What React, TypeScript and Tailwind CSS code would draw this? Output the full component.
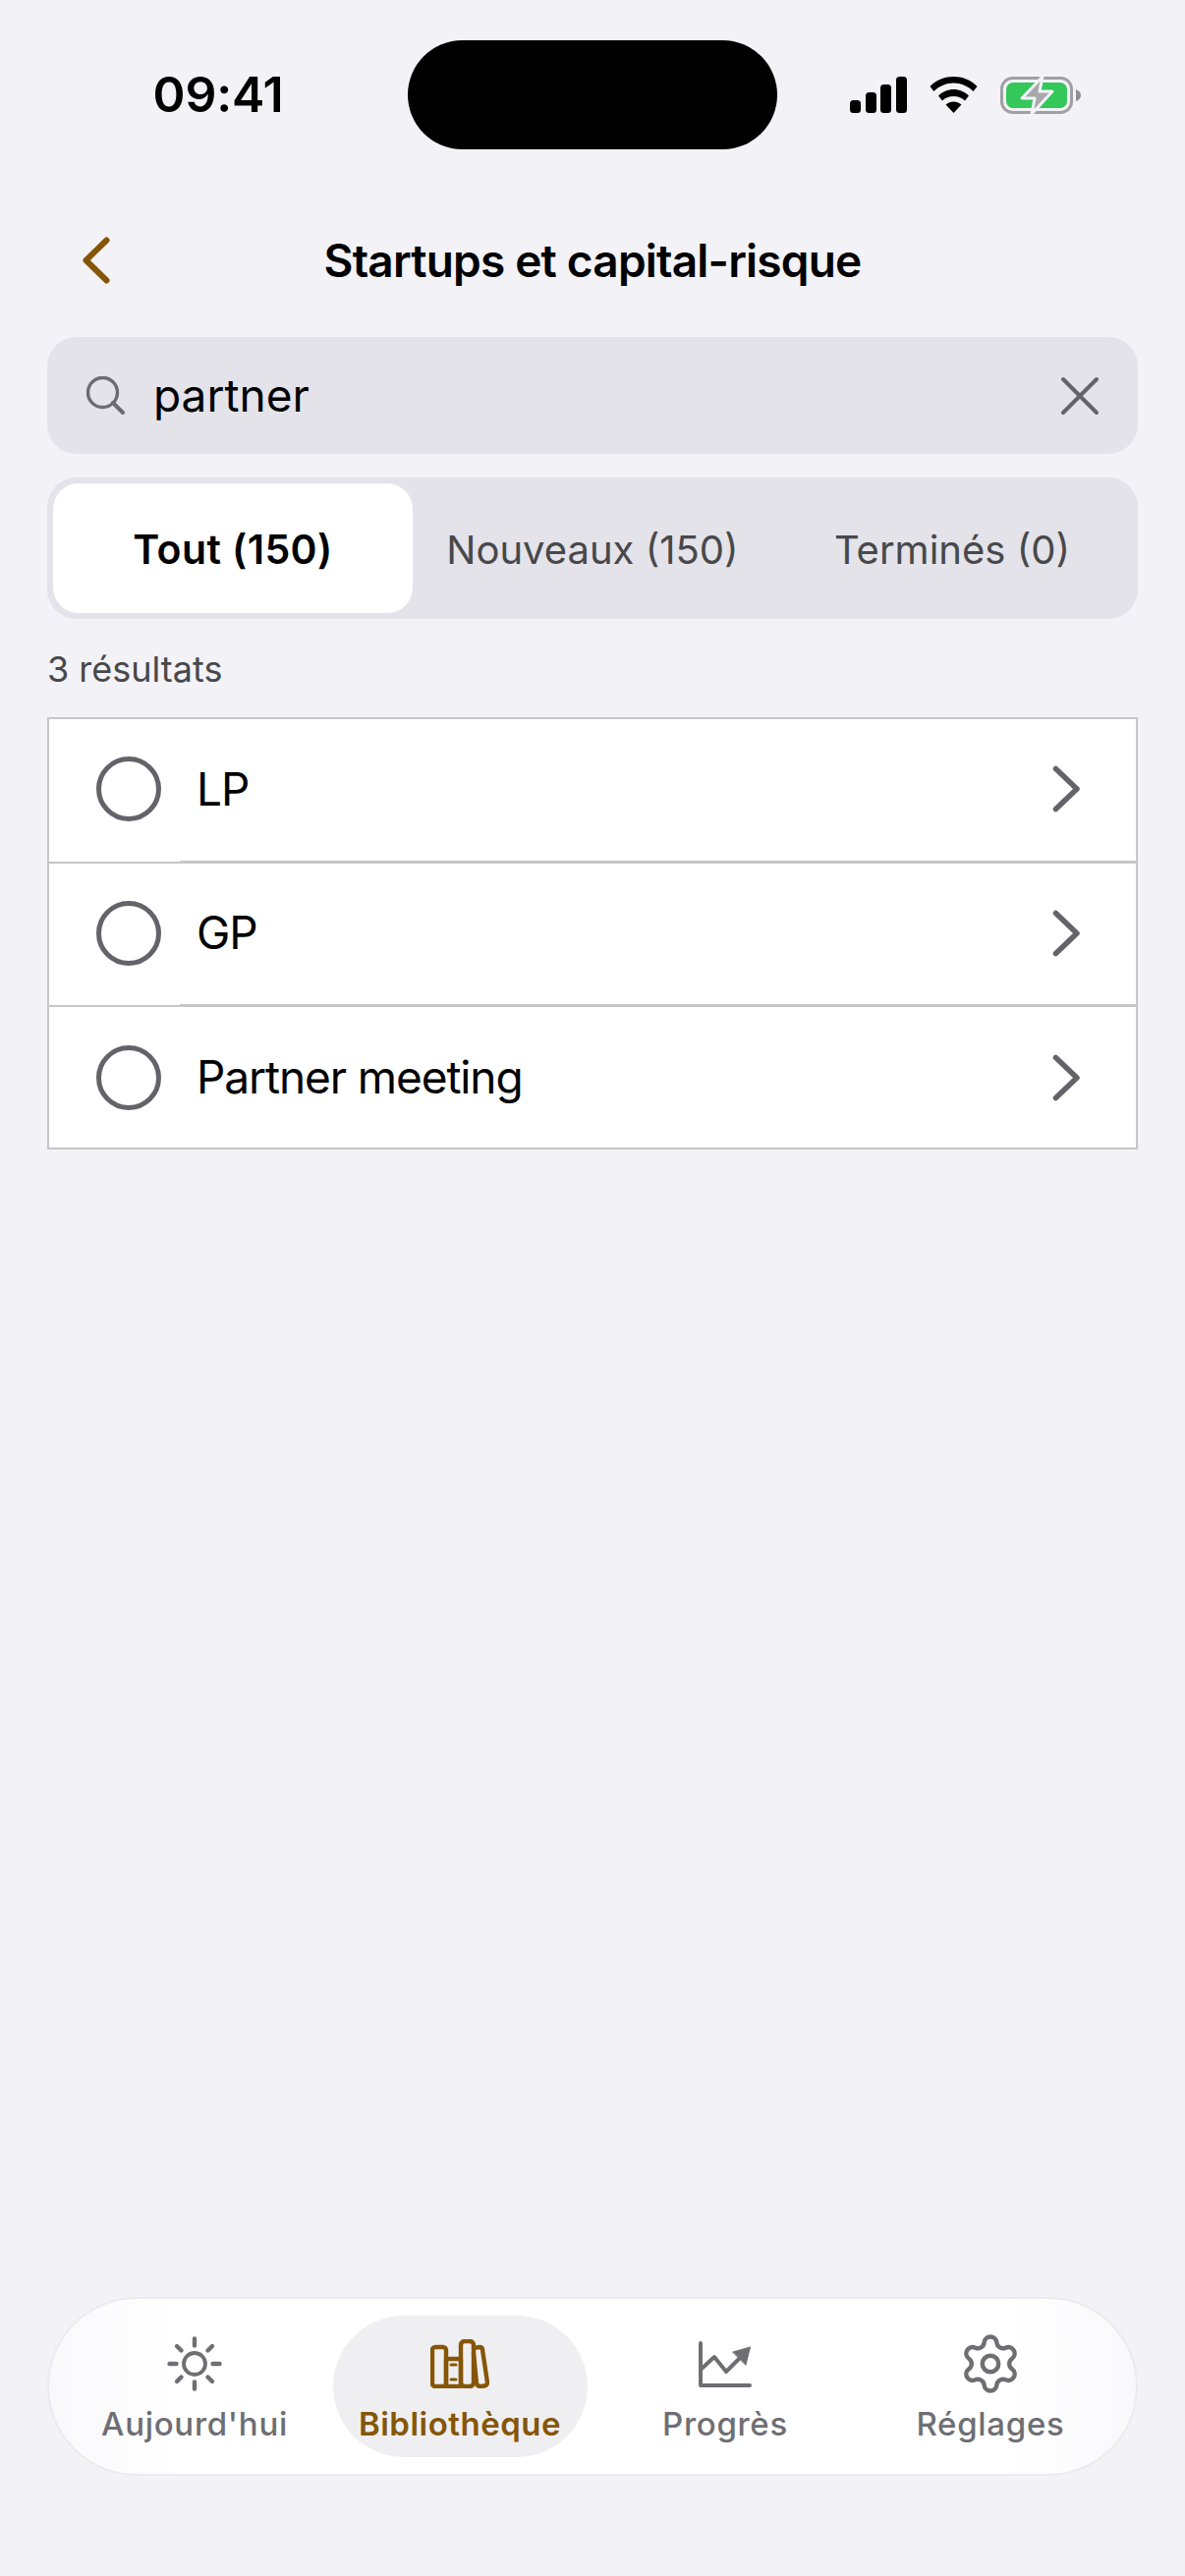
import { Settings } from "lucide-react";

const font = { fontFamily: "Inter, sans-serif" };

function SignalIcon() {
  return (
    <svg width="58" height="37" viewBox="0 0 58 37" fill="#000">
      <rect x="0" y="24" width="11" height="13" rx="3.5" />
      <rect x="16" y="16" width="11" height="21" rx="3.5" />
      <rect x="31" y="8" width="11" height="29" rx="3.5" />
      <rect x="47" y="0" width="11" height="37" rx="3.5" />
    </svg>
  );
}

function WifiIcon() {
  return (
    <svg width="49" height="37" viewBox="0 0 49 37" fill="#000">
      <path d="M0.5 10C7 3 16 0 24.5 0C33 0 42 3 48.5 10L44.5 15C39 9.5 32 6.5 24.5 6.5C17 6.5 10 9.5 4.5 15Z" />
      <path d="M9 19.5C13 15.5 18.5 13 24.5 13C30.5 13 36 15.5 40 19.5L36 24.5C33 21.5 29 20 24.5 20C20 20 16 21.5 13 24.5Z" />
      <path d="M24.5 37L16.5 28.5C19 26.5 21.5 25.5 24.5 25.5C27.5 25.5 30 26.5 32.5 28.5Z" />
    </svg>
  );
}

function BatteryIcon() {
  return (
    <svg width="82" height="40" viewBox="0 0 82 40" fill="none">
      <rect x="1.5" y="2.5" width="71" height="35" rx="11" stroke="#a0a0a3" strokeWidth="3" />
      <rect x="6" y="7" width="62" height="26" rx="7" fill="#34c759" />
      <path d="M77 14C80 15 82 17 82 20C82 23 80 25 77 26Z" fill="#8e8e93" />
      <path d="M43 1L22 23H35L32 39L53 16H40Z" fill="#a9a9ad" stroke="#f2f2f7" strokeWidth="3" strokeLinejoin="round" />
    </svg>
  );
}

function SearchIcon() {
  return (
    <svg width="39" height="39" viewBox="0 0 39 39" fill="none" stroke="#6b6b70" strokeWidth="3.4" strokeLinecap="round">
      <circle cx="16.5" cy="16.5" r="15" />
      <path d="M27 27L37 37" strokeWidth="4" />
    </svg>
  );
}

function ClearIcon() {
  return (
    <svg width="40" height="40" viewBox="0 0 40 40" fill="none" stroke="#636369" strokeWidth="4" strokeLinecap="round">
      <path d="M3 3L37 37M37 3L3 37" />
    </svg>
  );
}

function SunIcon() {
  return (
    <svg width="56" height="56" viewBox="0 0 56 56" fill="none" stroke="#6e6e73" strokeWidth="4.4" strokeLinecap="round">
      <circle cx="28" cy="28" r="11" strokeWidth="3.8" />
      <path d="M28 2.5V9.5M28 46.5V53.5M2.5 28H9.5M46.5 28H53.5M10 10L14.5 14.5M41.5 41.5L46 46M10 46L14.5 41.5M41.5 14.5L46 10" />
    </svg>
  );
}

function BooksIcon() {
  return (
    <svg width="60" height="50" viewBox="0 0 60 50" fill="none" stroke="#855608" strokeWidth="4.4" strokeLinejoin="round" strokeLinecap="round">
      <rect x="2" y="8" width="14" height="40" rx="3" />
      <rect x="16" y="20" width="15" height="28" rx="1" />
      <rect x="31" y="2" width="13" height="46" rx="4" />
      <path d="M44 9L50 8C52 8 53 9 53 10.5L58 44C58 46 57 47 55 47.5L51 48C49 48 47.5 47 47 45L44 14" />
      <path d="M21 26H26M21 41H26" strokeWidth="3" />
    </svg>
  );
}

function ChartIcon() {
  return (
    <svg width="54" height="47" viewBox="0 0 54 47" fill="none" stroke="#6e6e73" strokeWidth="4" strokeLinecap="round" strokeLinejoin="round">
      <path d="M2 2V45H52" />
      <path d="M2 29L16 16L28 31L42 17" />
      <path d="M35 11L52.5 6L48 24Z" fill="#6e6e73" stroke="#6e6e73" strokeWidth="1" />
    </svg>
  );
}

function BackChevron() {
  return (
    <svg width="30" height="48" viewBox="0 0 30 48" fill="none" stroke="#855608" strokeWidth="6" strokeLinecap="round" strokeLinejoin="round">
      <path d="M25.5 3.5L4.5 24L25.5 44.5" />
    </svg>
  );
}

function RowChevron() {
  return (
    <svg width="30" height="48" viewBox="0 0 30 48" fill="none" stroke="#636369" strokeWidth="5.5" strokeLinecap="round" strokeLinejoin="round">
      <path d="M4.5 3.5L26 24L4.5 44.5" />
    </svg>
  );
}

function Row({ label, last }: { label: string; last?: boolean }) {
  return (
    <div className={`relative flex items-center pl-[48px] pr-[56px] ${last ? "h-[143px]" : "h-[146.5px] border-b-2 border-[#c6c6c8] pb-[2px]"}`}>
      <span className="h-[66px] w-[66px] shrink-0 rounded-full border-[5px] border-[#636369]" />
      <span className="ml-[36px] flex-1 text-[46px] tracking-[-1.1px] text-black">{label}</span>
      <RowChevron />
      {!last && <span className="absolute bottom-0 left-[133px] right-0 h-[1px] bg-[#c6c6c8]" />}
    </div>
  );
}

function TabItem({ icon, label, active }: { icon: React.ReactNode; label: string; active?: boolean }) {
  return (
    <div className="flex justify-center">
      <div className={`flex h-[144px] w-[259px] flex-col items-center pt-[21px] ${active ? "rounded-[72px] bg-[#efeff1] text-[#855608]" : "text-[#6e6e73]"}`}>
        <div className="flex h-[56px] items-center justify-center">{icon}</div>
        <span className={`mt-[13px] text-[33px] leading-[40px] ${active ? "font-semibold tracking-[0.5px]" : "font-medium tracking-[0.7px]"}`}>{label}</span>
      </div>
    </div>
  );
}

export default function App() {
  return (
    <div style={font} className="flex h-[2622px] w-[1206px] flex-col overflow-hidden bg-[#f2f2f7]">
      <div className="mt-[41px] flex h-[111px] items-center">
        <span className="ml-[155px] mt-[-1px] w-[134px] text-center text-[50px] font-semibold tracking-[-0.2px] text-black">09:41</span>
        <div className="ml-[126px] h-[111px] w-[376px] rounded-[56px] bg-black" />
        <div className="ml-[74px] flex items-center gap-[23px]">
          <SignalIcon />
          <WifiIcon />
          <BatteryIcon />
        </div>
      </div>

      <header className="mt-[68px] grid h-[90px] grid-cols-[1fr_auto_1fr] items-center">
        <div className="pl-[83px]">
          <BackChevron />
        </div>
        <h1 className="text-[46px] font-semibold tracking-[-0.8px] text-black">Startups et capital-risque</h1>
      </header>

      <div className="mx-[48px] mt-[33px] flex h-[119px] items-center rounded-[30px] bg-[#e3e3e9] pl-[40px] pr-[39px]">
        <SearchIcon />
        <span className="ml-[29px] flex-1 text-[46px] text-black">partner</span>
        <ClearIcon />
      </div>

      <div className="mx-[48px] mt-[24px] grid h-[144px] grid-cols-3 items-center rounded-[30px] bg-[#e3e3e9] px-[6px]">
        <div className="flex h-[132px] items-center justify-center rounded-[26px] bg-white pt-[4px] text-[41px] font-semibold tracking-[0.4px] text-black">Tout (150)</div>
        <div className="pt-[4px] text-center text-[40px] text-[#48484a]">Nouveaux (150)</div>
        <div className="pt-[4px] text-center text-[40px] text-[#48484a]">Terminés (0)</div>
      </div>

      <p className="mx-[48px] mt-[29px] text-[36px] leading-[44px] text-[#48484a]">3 résultats</p>

      <div className="mx-[48px] mt-[27px] border-2 border-[#c6c6c8] bg-white">
        <Row label="LP" />
        <Row label="GP" />
        <Row label="Partner meeting" last />
      </div>

      <nav className="mx-[48px] mb-[102px] mt-auto grid h-[182px] grid-cols-4 items-center rounded-[91px] border-2 border-[#ebebef] bg-[linear-gradient(90deg,#f9f9fc_0%,#ffffff_12%,#ffffff_88%,#f9f9fc_100%)] px-[13px]">
        <TabItem icon={<SunIcon />} label="Aujourd'hui" />
        <TabItem active icon={<BooksIcon />} label="Bibliothèque" />
        <TabItem icon={<ChartIcon />} label="Progrès" />
        <TabItem icon={<Settings size={66} strokeWidth={1.6} />} label="Réglages" />
      </nav>
    </div>
  );
}
